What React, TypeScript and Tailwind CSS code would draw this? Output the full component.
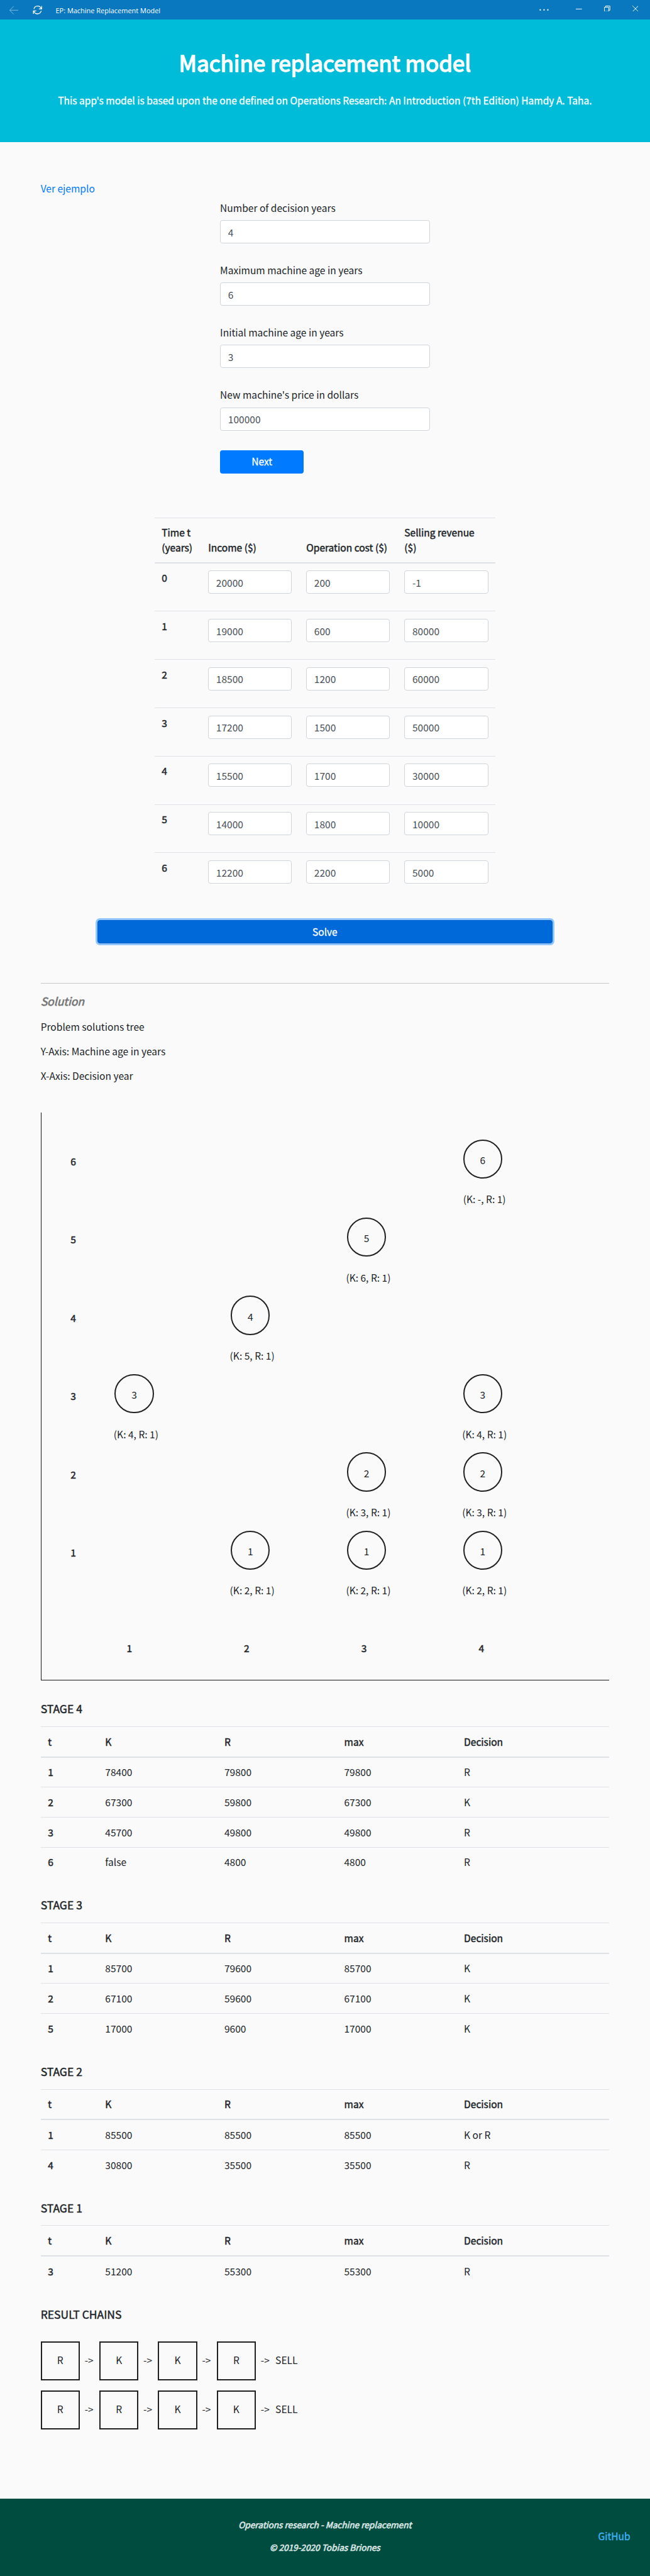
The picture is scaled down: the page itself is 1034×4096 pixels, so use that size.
const field =
  "block w-full h-[38px] rounded border-[1.1px] border-[#ced4da] bg-white px-3 text-base leading-6 text-[#495057] outline-none";
const heavy = "[-webkit-text-stroke:0.5px_currentColor]";
const heading = "[-webkit-text-stroke:0.7px_currentColor]";
const medium = "[-webkit-text-stroke:0.3px_currentColor]";

const questions = [
  ["Number of decision years", "4"],
  ["Maximum machine age in years", "6"],
  ["Initial machine age in years", "3"],
  ["New machine's price in dollars", "100000"],
];

const inputRows = [
  ["20000", "200", "-1"],
  ["19000", "600", "80000"],
  ["18500", "1200", "60000"],
  ["17200", "1500", "50000"],
  ["15500", "1700", "30000"],
  ["14000", "1800", "10000"],
  ["12200", "2200", "5000"],
];

const tree: { age: number; nodes: (string | null)[] }[] = [
  { age: 6, nodes: [null, null, null, "-"] },
  { age: 5, nodes: [null, null, "6", null] },
  { age: 4, nodes: [null, "5", null, null] },
  { age: 3, nodes: ["4", null, null, "4"] },
  { age: 2, nodes: [null, null, "3", "3"] },
  { age: 1, nodes: [null, "2", "2", "2"] },
];

const stages = [
  {
    name: "STAGE 4",
    rows: [
      ["1", "78400", "79800", "79800", "R"],
      ["2", "67300", "59800", "67300", "K"],
      ["3", "45700", "49800", "49800", "R"],
      ["6", "false", "4800", "4800", "R"],
    ],
  },
  {
    name: "STAGE 3",
    rows: [
      ["1", "85700", "79600", "85700", "K"],
      ["2", "67100", "59600", "67100", "K"],
      ["5", "17000", "9600", "17000", "K"],
    ],
  },
  {
    name: "STAGE 2",
    rows: [
      ["1", "85500", "85500", "85500", "K or R"],
      ["4", "30800", "35500", "35500", "R"],
    ],
  },
  { name: "STAGE 1", rows: [["3", "51200", "55300", "55300", "R"]] },
];

const chains = [
  ["R", "K", "K", "R"],
  ["R", "R", "K", "K"],
];

function TitleBar() {
  return (
    <div className="flex h-8 items-center bg-[#0a78be] text-white">
      <svg className="ml-[14px] size-4 opacity-50" viewBox="0 0 16 16" fill="none" stroke="currentColor">
        <path d="M16 8.5H1.5M8 2L1.5 8.5L8 15" />
      </svg>
      <svg className="ml-6 size-4" viewBox="0 0 16 16" fill="none" stroke="currentColor" strokeWidth="1.3">
        <path d="M2 6.5A6.2 6.2 0 0 1 14 6M14.8 1.5V6.3H10.2M14 9.5A6.2 6.2 0 0 1 2 10M1.2 14.5V9.7H5.8" />
      </svg>
      <span className="ml-[21px] pt-[2px] font-['Open_Sans',sans-serif] text-[11.3px]">EP: Machine Replacement Model</span>
      <svg className="ml-auto mr-[41px] h-4 w-5" viewBox="0 0 20 16" fill="currentColor">
        <circle cx="2.5" cy="8" r="1.2" />
        <circle cx="8.7" cy="8" r="1.2" />
        <circle cx="14.9" cy="8" r="1.2" />
      </svg>
      <svg className="mb-1 h-[10px] w-[10px]" viewBox="0 0 10 10" stroke="currentColor">
        <path d="M0 5.5H10" />
      </svg>
      <svg className="mb-1 ml-9 h-[10px] w-[10px]" viewBox="0 0 10 10" fill="none" stroke="currentColor">
        <path d="M.5 2.5H7.5V9.5H.5ZM2.5 2.5V.5H9.5V7.5H7.5" />
      </svg>
      <svg className="mb-1 ml-9 mr-[19px] h-[10px] w-[10px]" viewBox="0 0 10 10" stroke="currentColor">
        <path d="M0 0L10 10M10 0L0 10" />
      </svg>
    </div>
  );
}

function InputTable() {
  return (
    <div className="mx-auto mt-[72px] w-[558px]">
      <div className="grid h-[75px] grid-cols-[76px_160.5px_160.5px_161px] items-end border-t-[1.1px] border-b-[2.1px] border-[#dee2e6] pb-3">
        {["Time t (years)", "Income ($)", "Operation cost ($)", "Selling revenue ($)"].map((h) => (
          <div key={h} className={`px-3 ${heavy}`}>{h}</div>
        ))}
      </div>
      {inputRows.map((row, i) => (
        <div
          key={i}
          className={`grid grid-cols-[76px_160.5px_160.5px_161px] border-[#dee2e6] pt-3 ${i ? "h-[79px] border-t-[1.1px]" : "h-[78px]"}`}
        >
          <div className={`px-3 ${heavy}`}>{i}</div>
          {row.map((v, j) => (
            <div key={j} className="px-3">
              <input className={field} defaultValue={v} />
            </div>
          ))}
        </div>
      ))}
    </div>
  );
}

function Tree() {
  return (
    <div className="mt-12 h-[929px] border-b-[1.1px] border-l-[1.1px] border-[#16181b] pt-[44px]">
      {tree.map(({ age, nodes }) => (
        <div key={age} className="flex h-32">
          <div className={`w-[72px] pl-12 pt-6 ${heavy}`}>{age}</div>
          {nodes.map((keep, i) => (
            <div key={i} className="w-[190px]">
              {keep && (
                <div className="flex flex-col items-center pr-[30px]">
                  <div className="flex h-16 w-16 justify-center rounded-full border-[2.1px] border-[#212121] pt-5">{age}</div>
                  <div className="mt-[22px] pl-[6px] whitespace-nowrap">{`(K: ${keep}, R: 1)`}</div>
                </div>
              )}
            </div>
          ))}
        </div>
      ))}
      <div className={`flex pl-12 pt-[52px] ${heavy}`}>
        {[1, 2, 3, 4].map((n) => (
          <div key={n} className="w-48 text-center">{n}</div>
        ))}
      </div>
    </div>
  );
}

function Stage({ name, rows }: { name: string; rows: string[][] }) {
  const cols = "grid grid-cols-[93.5px_195px_196px_196px_1fr] border-[#dee2e6]";
  return (
    <section className="pt-[34px]">
      <h6 className={`h-[41px] text-lg leading-6 ${heavy}`}>{name}</h6>
      <div className={`${cols} h-[51px] border-t-[1.1px] border-b-[2.1px] pt-3 ${heavy}`}>
        {["t", "K", "R", "max", "Decision"].map((h) => (
          <div key={h} className="px-3">{h}</div>
        ))}
      </div>
      {rows.map((row, i) => (
        <div key={i} className={`${cols} pt-3 ${i ? "h-[49px] border-t-[1.1px]" : "h-12"}`}>
          {row.map((v, j) => (
            <div key={j} className={`px-3 ${j === 0 ? heavy : ""}`}>{v}</div>
          ))}
        </div>
      ))}
    </section>
  );
}

function Chain({ steps }: { steps: string[] }) {
  return (
    <div className="mb-4 flex h-16">
      {steps.map((s, i) => (
        <div key={i} className="flex w-24">
          <div className="flex h-16 w-16 justify-center border-[2.1px] border-[#212121] pt-4">{s}</div>
          <div className="w-8 pt-[18px] pl-2">-&gt;</div>
        </div>
      ))}
      <div className="pt-[18px]">SELL</div>
    </div>
  );
}

export default function App() {
  return (
    <div className="h-[4212px] w-[1063px] overflow-hidden bg-[#fafafa] font-['Noto_Sans_CJK_JP','Noto_Sans_CJK_SC',sans-serif] text-base leading-6 text-[#212529] [zoom:0.9725]">
      <TitleBar />
      <header className="h-[200px] bg-[#00bcd8] pt-[46px] text-center text-white">
        <h1 className="text-4xl leading-[48px] [-webkit-text-stroke:1.5px_currentColor]">Machine replacement model</h1>
        <p className={`mt-[26px] leading-6 ${medium}`}>
          This app's model is based upon the one defined on Operations Research: An Introduction (7th Edition) Hamdy A. Taha.
        </p>
      </header>
      <main className="mx-auto h-[3853px] w-[930px] pt-16">
        <a className="block h-8 text-[#007bff]">Ver ejemplo</a>
        <form className="mx-auto w-[343px]">
          {questions.map(([label, value]) => (
            <div key={label} className="mb-8">
              <label className="mb-2 block">{label}</label>
              <input className={field} defaultValue={value} />
            </div>
          ))}
          <button type="button" className={`block h-[38px] w-[137px] rounded bg-[#007bff] text-white ${medium}`}>Next</button>
        </form>
        <InputTable />
        <button className={`mx-auto mt-8 block h-[38px] w-[744px] rounded border border-[#0062cc] bg-[#0069d9] text-white shadow-[0_0_0_3px_rgba(38,143,255,0.5)] ${medium}`}>
          Solve
        </button>
        <hr className="mt-16 border-t-[1.1px] border-[#c8c8c8]" />
        <h5 className={`mt-[15px] h-11 text-lg leading-7 text-[#757575] italic ${heading}`}>Solution</h5>
        <p className="mb-4">Problem solutions tree</p>
        <p className="mb-4">Y-Axis: Machine age in years</p>
        <p className="mb-4">X-Axis: Decision year</p>
        <Tree />
        {stages.map((s) => (
          <Stage key={s.name} {...s} />
        ))}
        <h6 className={`mt-[34px] mb-[33px] text-lg leading-6 ${heavy}`}>RESULT CHAINS</h6>
        {chains.map((c, i) => (
          <Chain key={i} steps={c} />
        ))}
      </main>
      <footer className="relative h-[127px] bg-[#004d40] pt-[31px] text-center text-sm italic text-[#d9e4e2]">
        <p className={`mb-[13px] leading-6 ${heading}`}>Operations research - Machine replacement</p>
        <p className={`leading-6 ${heading}`}>© 2019-2020 Tobias Briones</p>
        <a className={`absolute top-[50px] right-8 text-base not-italic text-[#42b4fc] ${medium}`}>GitHub</a>
      </footer>
    </div>
  );
}
